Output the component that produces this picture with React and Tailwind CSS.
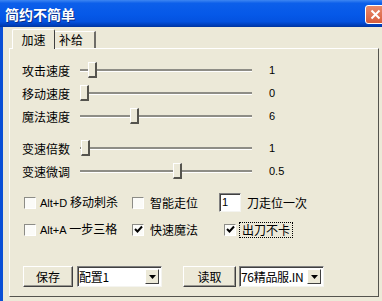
import React from "react";

const CJK = "font-['Noto_Sans_CJK_SC','Noto_Sans',sans-serif]";

function Slider({ label, value, pos }) {
  return (
    <div className="h-[23px] flex items-center">
      <div className="w-[58px] text-[12px] leading-none text-black">{label}</div>
      <div className="relative w-[172px] h-[3px] bg-[#8e8d86] border-b border-white">
        <div
          className="absolute top-[-7px] w-[9px] h-[16px] bg-[#ECE9D8] border-l border-t border-white border-r-[2px] border-b-[2px] border-r-[#55544e] border-b-[#55544e]"
          style={{ left: pos }}
        />
      </div>
      <div className="ml-[17px] text-[11px] leading-none font-['Liberation_Sans',sans-serif] text-black">{value}</div>
    </div>
  );
}

function Check({ checked }) {
  return (
    <div className="w-[12px] h-[12px] shrink-0 bg-[#fbfbf8] border-t border-l border-t-[#8c8c86] border-l-[#8c8c86] border-b border-r border-b-white border-r-white flex items-center justify-center">
      {checked && (
        <svg width="9" height="9" viewBox="0 0 9 9">
          <polyline points="1,4 3.5,6.5 8,1.5" fill="none" stroke="#000" strokeWidth="2" />
        </svg>
      )}
    </div>
  );
}

function Button({ children, w }) {
  return (
    <div className={`${w} h-[21px] bg-[#ECE9D8] border border-white border-r-[#404040] border-b-[#404040] shadow-[inset_-1px_-1px_0_#9a9890] flex items-center justify-center text-[12px] leading-none text-black`}>
      {children}
    </div>
  );
}

function Select({ children }) {
  return (
    <div className="w-[85px] h-[21px] bg-white border border-[#808080] border-r-[#f4f4f0] border-b-[#f4f4f0] shadow-[inset_1px_1px_0_#404040] flex items-center pl-[1px] pr-[2px]">
      <div className="flex-1 text-[12px] leading-[16px] text-black whitespace-nowrap tracking-[-0.3px]">{children}</div>
      <div className="w-[14px] h-[15px] shrink-0 bg-[#ECE9D8] border border-white border-r-[#404040] border-b-[#404040] flex items-center justify-center">
        <svg width="7" height="4" viewBox="0 0 7 4">
          <polygon points="0,0 7,0 3.5,4" fill="#000" />
        </svg>
      </div>
    </div>
  );
}

export default function App() {
  return (
    <div className={`w-[382px] h-[301px] overflow-hidden flex flex-col bg-[#ECE9D8] ${CJK}`}>
      {/* Title bar */}
      <div className="h-[27px] shrink-0 flex items-center justify-between pl-[5px] bg-[linear-gradient(to_bottom,#3d86f2_0%,#0c5fea_12%,#0558e8_55%,#0452df_80%,#0040bd_92%,#00359f_100%)]">
        <span className="text-white font-bold text-[14px] leading-none tracking-[0px] [text-shadow:1px_1px_0_#0a2f8a]">简约不简单</span>
        <div className="w-[20px] h-[19px] mr-[-3px] mt-[2px] rounded-[3px] border border-white bg-[linear-gradient(to_bottom,#e98a6c,#d65d3c)] flex items-center justify-center">
          <svg width="11" height="11" viewBox="0 0 11 11">
            <path d="M1.5 1.5 L9.5 9.5 M9.5 1.5 L1.5 9.5" stroke="#fff" strokeWidth="2" />
          </svg>
        </div>
      </div>
      {/* Body */}
      <div className="flex-1 flex flex-row">
        <div className="w-[3px] bg-[#0a4fd6]" />
        <div className="flex-1 pl-[6px] pt-[2px] flex flex-col">
          {/* Tabs */}
          <div className="h-[19px] flex items-end pl-[3px] relative z-10">
            <div className="w-[43px] h-[20px] mb-[-1px] bg-[#ECE9D8] border-l border-t border-white border-r border-r-[#404040] rounded-t-[2px] flex items-center justify-center text-[12px] leading-none text-black">
              加速
            </div>
            <div className="w-[41px] h-[17px] bg-[#ECE9D8] border-t border-white border-r-[2px] border-r-[#6e6d68] flex items-center pl-[4px] text-[12px] leading-none text-black">
              补给
            </div>
          </div>
          {/* Panel */}
          <div className="w-[370px] h-[249px] border-l border-t border-white border-r border-b border-r-[#55544e] border-b-[#55544e] pt-[10px] flex flex-col">
            <div className="pl-[12px] flex flex-col">
              <Slider label="攻击速度" value="1" pos={8} />
              <Slider label="移动速度" value="0" pos={0} />
              <Slider label="魔法速度" value="6" pos={50} />
              <div className="h-[9px]" />
              <Slider label="变速倍数" value="1" pos={1} />
              <Slider label="变速微调" value="0.5" pos={93} />
            </div>
            <div className="mt-[6px] pl-[14px] flex flex-col">
              <div className="h-[27px] flex items-center">
                <div className="w-[108px] flex items-center">
                  <Check />
                  <span className="ml-[4px] text-[12px] leading-none whitespace-nowrap text-black">
                    <span className="font-['Liberation_Sans',sans-serif] text-[11px]">Alt+D</span> 移动刺杀
                  </span>
                </div>
                <div className="w-[87px] flex items-center">
                  <Check />
                  <span className="ml-[6px] text-[12px] leading-none text-black">智能走位</span>
                </div>
                <div className="w-[22px] h-[19px] bg-white border border-[#808080] border-r-[#f4f4f0] border-b-[#f4f4f0] shadow-[inset_1px_1px_0_#404040] flex items-center pl-[2px] text-[11px] leading-none font-['Liberation_Sans',sans-serif] text-black">
                  1
                </div>
                <span className="ml-[6px] text-[12px] leading-none text-black">刀走位一次</span>
              </div>
              <div className="h-[27px] flex items-center">
                <div className="w-[108px] flex items-center">
                  <Check />
                  <span className="ml-[4px] text-[12px] leading-none whitespace-nowrap text-black">
                    <span className="font-['Liberation_Sans',sans-serif] text-[11px]">Alt+A</span> 一步三格
                  </span>
                </div>
                <div className="w-[92px] flex items-center">
                  <Check checked />
                  <span className="ml-[6px] text-[12px] leading-none text-black">快速魔法</span>
                </div>
                <Check checked />
                <span className="ml-[3px] px-[2px] h-[16px] flex items-center border border-dotted border-black text-[12px] leading-none text-black">出刀不卡</span>
              </div>
            </div>
            <div className="mt-[23px] pl-[13px] flex items-center">
              <Button w="w-[50px]">保存</Button>
              <div className="ml-[4px]">
                <Select>配置1</Select>
              </div>
              <div className="ml-[21px]">
                <Button w="w-[53px]">读取</Button>
              </div>
              <div className="ml-[3px]">
                <Select>76精品服.IN</Select>
              </div>
            </div>
          </div>
        </div>
      </div>
    </div>
  );
}
